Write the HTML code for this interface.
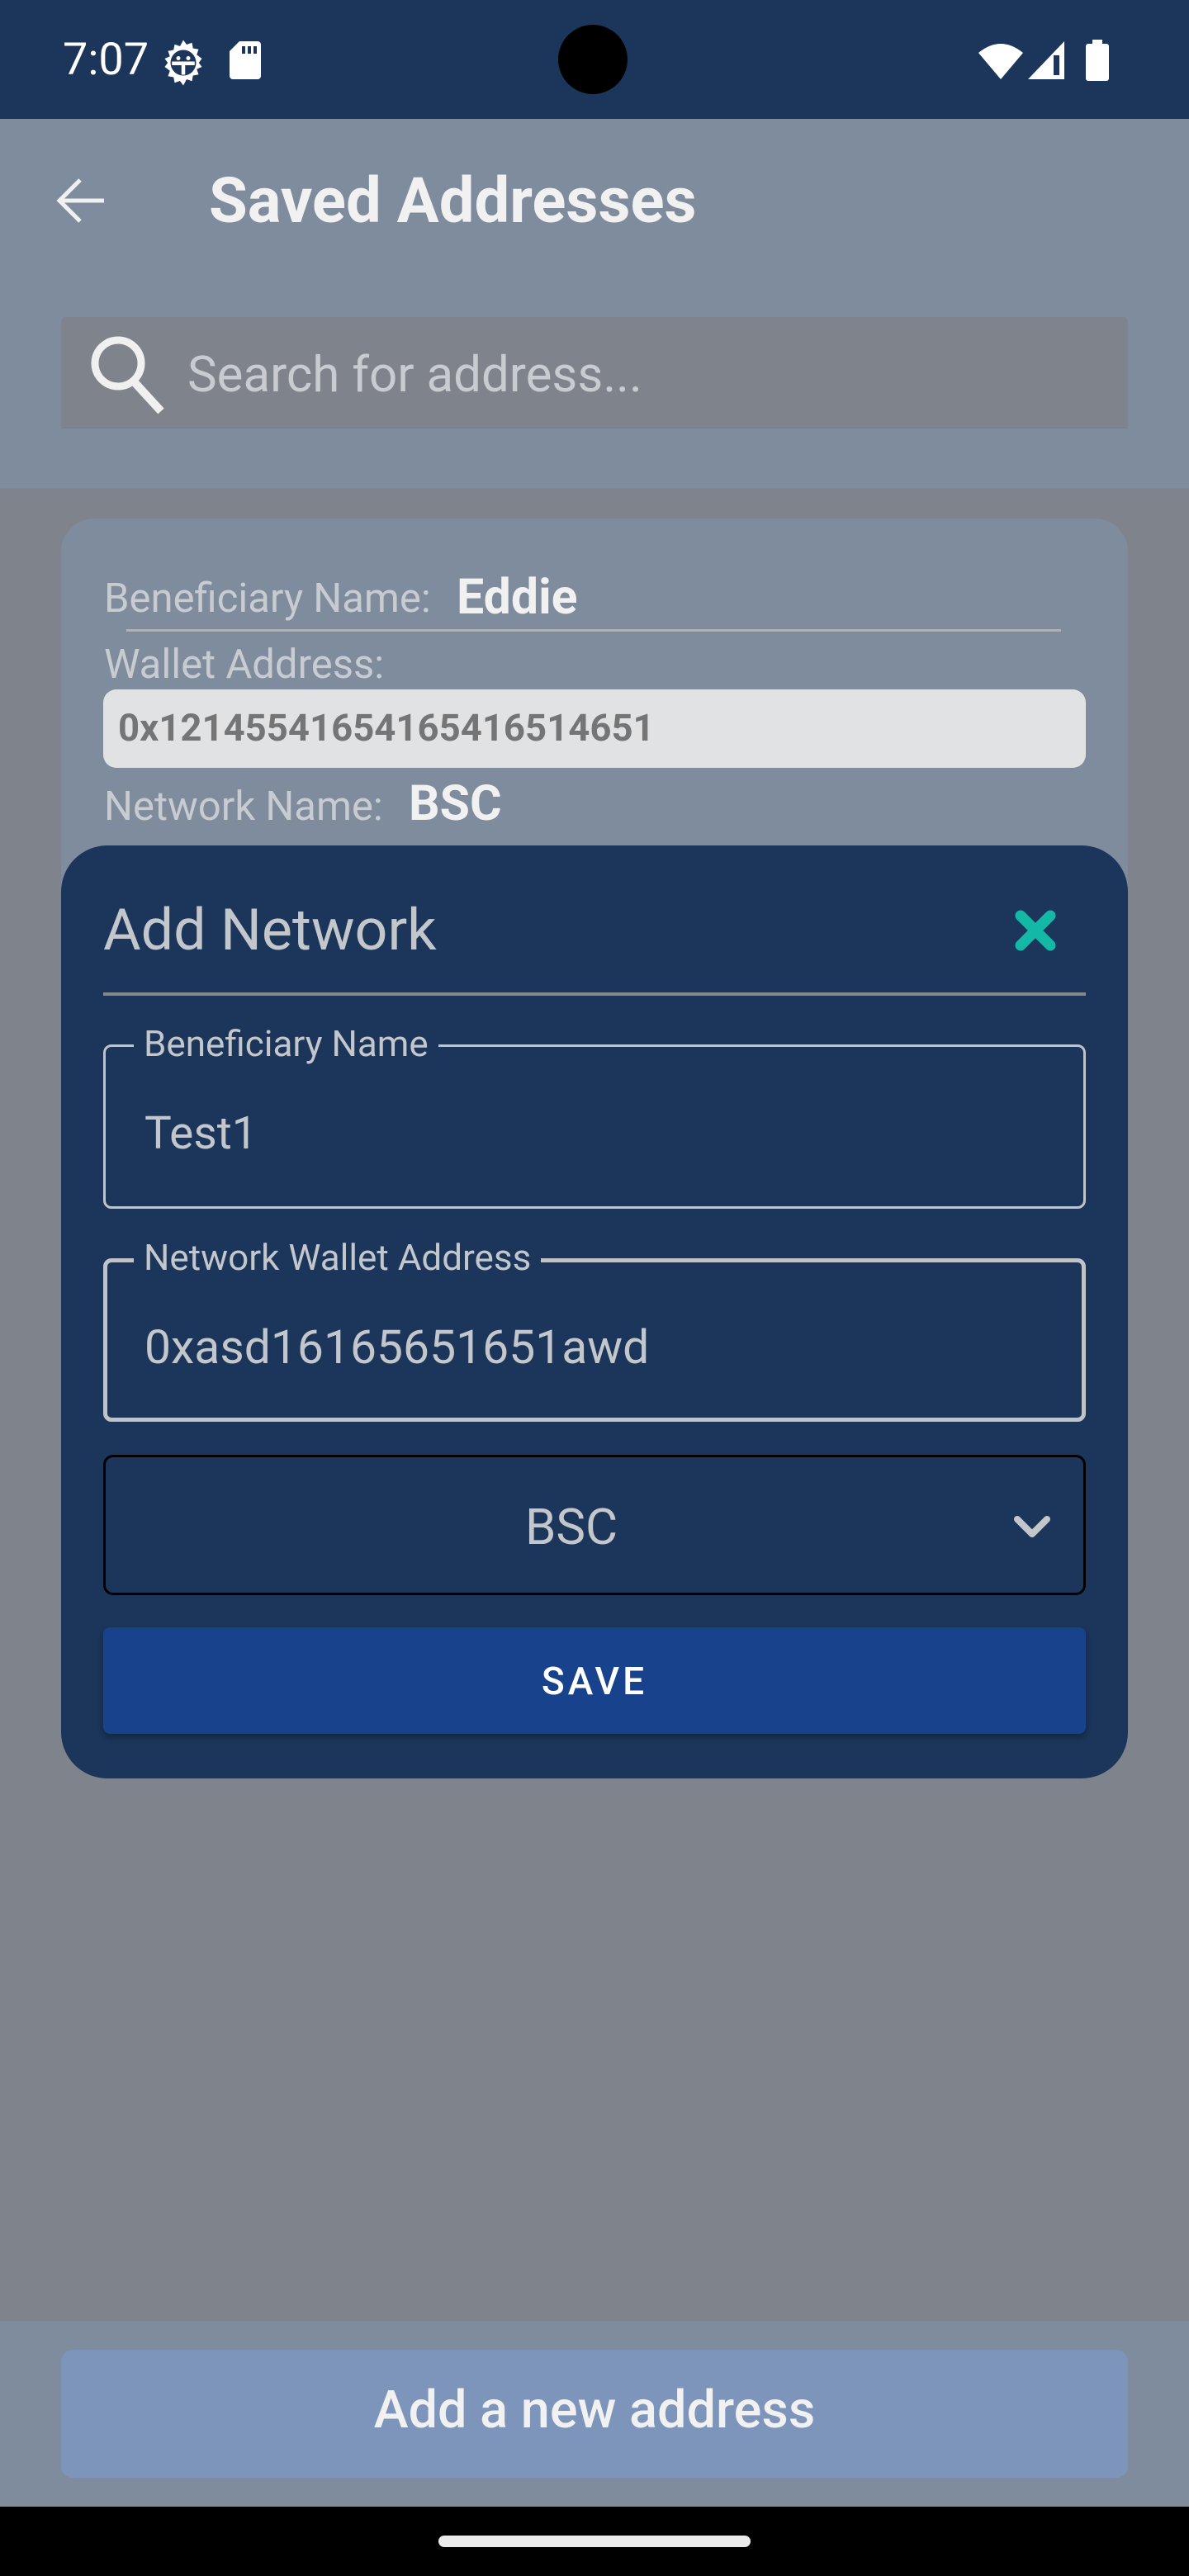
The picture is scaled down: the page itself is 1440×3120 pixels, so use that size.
<!DOCTYPE html>
<html><head><meta charset="utf-8"><style>
*{margin:0;padding:0;box-sizing:border-box}
body{width:1440px;height:3120px;position:relative;overflow:hidden;background:#7f838b;font-family:"Roboto","Liberation Sans",sans-serif}
.abs{position:absolute}
.t{position:absolute;white-space:nowrap;line-height:1}
</style></head><body>
<!-- status bar -->
<div class="abs" style="left:0;top:0;width:1440px;height:144px;background:#1b365a"></div>
<div class="t" style="left:76px;top:46px;font-size:54px;color:#fff">7:07</div>
<svg class="abs" style="left:192px;top:46px" width="60" height="60" viewBox="0 0 24 24"><path fill="#fff" d="M12 1l1.6 2.2 2.6-.9.5 2.7 2.7.5-.9 2.6L21 10l-1.5 2 1.5 2-2.5 1.1.9 2.6-2.7.5-.5 2.7-2.6-.9L12 23l-1.6-2.2-2.6.9-.5-2.7-2.7-.5.9-2.6L3 14l1.5-2L3 10l2.5-1.1-.9-2.6 2.7-.5.5-2.7 2.6.9z"/><circle cx="12" cy="12" r="6.2" fill="#1b365a"/><path d="M6.5 12.3h11M12 12.3v5.5" stroke="#fff" stroke-width="1.8"/><circle cx="9.6" cy="9.8" r="1" fill="#fff"/><circle cx="14.4" cy="9.8" r="1" fill="#fff"/></svg>
<svg class="abs" style="left:278px;top:50px" width="38" height="46" viewBox="0 0 38 46"><path fill="#fff" d="M12 0h22a4 4 0 0 1 4 4v38a4 4 0 0 1-4 4H4a4 4 0 0 1-4-4V12z"/><rect x="15" y="6" width="4" height="9" fill="#1b365a"/><rect x="22" y="6" width="4" height="9" fill="#1b365a"/><rect x="29" y="6" width="4" height="9" fill="#1b365a"/></svg>
<div class="abs" style="left:676px;top:30px;width:84px;height:84px;border-radius:50%;background:#000"></div>
<svg class="abs" style="left:1185px;top:50px" width="54" height="46" viewBox="0 0 54 46"><path fill="#fff" d="M0 14Q27-8 54 14L27 46z"/></svg>
<svg class="abs" style="left:1245px;top:50px" width="44" height="46" viewBox="0 0 44 46"><path fill="#fff" d="M44 0V46H0z"/><path fill="#1b365a" d="M31 17h7v24h-7z"/></svg>
<svg class="abs" style="left:1315px;top:48px" width="28" height="50" viewBox="0 0 28 50"><rect x="8" y="0" width="12" height="6" fill="#fff"/><rect x="0" y="5" width="28" height="45" rx="3" fill="#fff"/></svg>

<!-- app bar -->
<div class="abs" style="left:0;top:144px;width:1440px;height:447px;background:#7f8c9e"></div>
<svg class="abs" style="left:66px;top:212px" width="64" height="62" viewBox="0 0 64 62"><path d="M60 31H8M31 6L6 31l25 25" stroke="#f0f0f0" stroke-width="5" fill="none"/></svg>
<div class="t" style="left:253px;top:205px;font-size:76px;font-weight:bold;color:#f1f1f1">Saved Addresses</div>
<div class="abs" style="left:74px;top:384px;width:1292px;height:135px;background:#7f838b;border-radius:6px 6px 0 0;border-bottom:2px solid #77818f"></div>
<svg class="abs" style="left:105px;top:402px" width="100" height="100" viewBox="0 0 100 100"><circle cx="38" cy="38" r="28" stroke="#f0f0f0" stroke-width="9" fill="none"/><path d="M57 60l33 36" stroke="#f0f0f0" stroke-width="10"/></svg>
<div class="t" style="left:227px;top:424px;font-size:60px;color:#c8cbcf">Search for address...</div>

<!-- card -->
<div class="abs" style="left:74px;top:628px;width:1292px;height:500px;background:#7f8c9e;border-radius:40px"></div>
<div class="t" style="left:126px;top:700px;font-size:49px;color:#c8ccd1">Beneficiary Name:</div>
<div class="t" style="left:553px;top:694px;font-size:59px;font-weight:bold;color:#f1f1f1">Eddie</div>
<div class="abs" style="left:153px;top:762px;width:1132px;height:3px;background:#aeb1b5"></div>
<div class="t" style="left:126px;top:780px;font-size:49px;color:#c8ccd1">Wallet Address:</div>
<div class="abs" style="left:125px;top:835px;width:1190px;height:95px;background:#e1e2e4;border-radius:16px"></div>
<div class="t" style="left:143px;top:860px;font-size:45.5px;font-weight:bold;color:#757575">0x12145541654165416514651</div>
<div class="t" style="left:126px;top:952px;font-size:49px;color:#c8ccd1">Network Name:</div>
<div class="t" style="left:495px;top:944px;font-size:59px;font-weight:bold;color:#f1f1f1">BSC</div>

<!-- modal -->
<div class="abs" style="left:74px;top:1024px;width:1292px;height:1130px;background:#1b365a;border-radius:56px"></div>
<div class="t" style="left:125px;top:1092px;font-size:70px;color:#c3c7cc">Add Network</div>
<svg class="abs" style="left:1228px;top:1101px" width="52" height="52" viewBox="0 0 52 52"><path d="M8 8L44 44M44 8L8 44" stroke="#14b8a6" stroke-width="13" stroke-linecap="round"/></svg>
<div class="abs" style="left:125px;top:1202px;width:1190px;height:4px;background:#888"></div>

<div class="abs" style="left:125px;top:1265px;width:1190px;height:199px;border:3px solid #c0c4c8;border-radius:10px"></div>
<div class="t" style="left:162px;top:1242px;font-size:44px;color:#c3c7cc;background:#1b365a;padding:0 12px">Beneficiary Name</div>
<div class="t" style="left:175px;top:1346px;font-size:55px;color:#c3c7cc">Test1</div>

<div class="abs" style="left:125px;top:1524px;width:1190px;height:198px;border:5px solid #c0c4c8;border-radius:10px"></div>
<div class="t" style="left:162px;top:1501px;font-size:44px;color:#c3c7cc;background:#1b365a;padding:0 12px">Network Wallet Address</div>
<div class="t" style="left:175px;top:1603px;font-size:57px;color:#c3c7cc">0xasd16165651651awd</div>

<div class="abs" style="left:125px;top:1762px;width:1190px;height:170px;border:3px solid #000;border-radius:12px"></div>
<div class="t" style="left:636px;top:1820px;font-size:60px;color:#c3c7cc">BSC</div>
<svg class="abs" style="left:1226px;top:1832px" width="48" height="34" viewBox="0 0 48 34"><path d="M6 8l18 18L42 8" stroke="#c3c7cc" stroke-width="8" fill="none" stroke-linecap="round" stroke-linejoin="round"/></svg>

<div class="abs" style="left:125px;top:1971px;width:1190px;height:129px;background:#18428c;border-radius:8px;box-shadow:0 4px 8px rgba(0,0,0,.3)"></div>
<div class="t" style="left:125px;top:2014px;width:1190px;text-align:center;font-size:46px;font-weight:500;color:#fff;letter-spacing:4px">SAVE</div>

<!-- bottom -->
<div class="abs" style="left:0;top:2811px;width:1440px;height:225px;background:#7f8c9e"></div>
<div class="abs" style="left:74px;top:2846px;width:1292px;height:155px;background:#7e95bb;border-radius:14px"></div>
<div class="t" style="left:74px;top:2888px;width:1292px;text-align:center;font-size:63px;font-weight:500;color:#f1f1f1">Add a new address</div>
<div class="abs" style="left:0;top:3036px;width:1440px;height:84px;background:#000"></div>
<div class="abs" style="left:531px;top:3071px;width:378px;height:14px;background:#ebebeb;border-radius:7px"></div>
</body></html>
